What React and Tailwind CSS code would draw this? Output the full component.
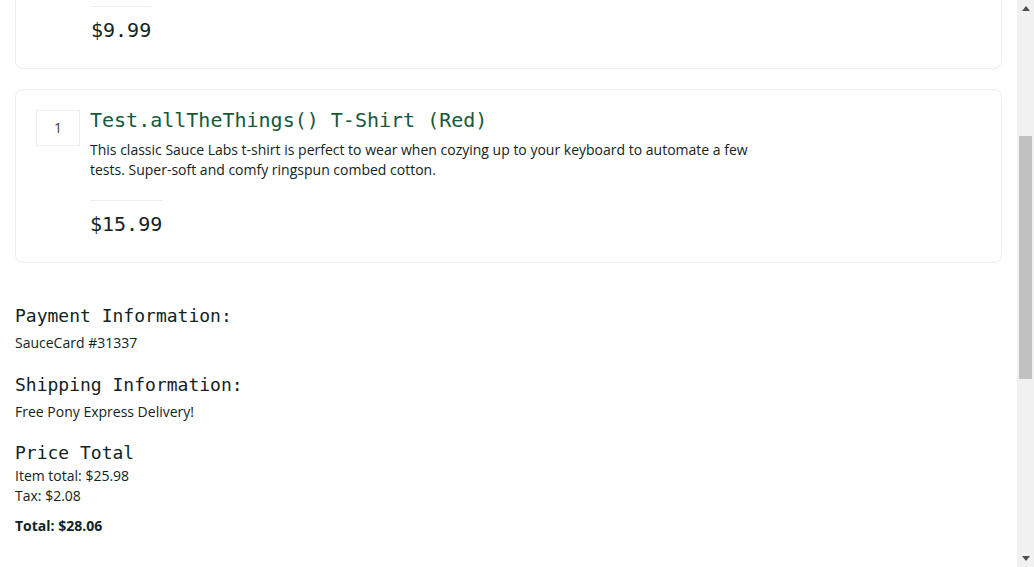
const mono = { fontFamily: '"DejaVu Sans Mono", "Liberation Mono", monospace' };

const ScrollBar = () => (
    <div className="w-[17px] h-full bg-[#f1f1f1] flex flex-col items-center shrink-0">
        <div className="h-[17px] flex items-center justify-center">
            <svg width="8" height="5" viewBox="0 0 8 5">
                <path d="M0 5 L4 0 L8 5 Z" fill="#505050" />
            </svg>
        </div>
        <div className="h-[119px]" />
        <div className="w-[13px] h-[243px] bg-[#c1c1c1]" />
        <div className="flex-1" />
        <div className="h-[17px] flex items-center justify-center">
            <svg width="8" height="5" viewBox="0 0 8 5">
                <path d="M0 0 L8 0 L4 5 Z" fill="#505050" />
            </svg>
        </div>
    </div>
);

const App = () => {
    return (
        <div
            className="w-[1034px] h-[567px] overflow-hidden flex bg-white text-[#132322]"
            style={{ fontFamily: '"Open Sans", "Noto Sans", sans-serif' }}
        >
            <div className="flex-1 px-[15px]">
                {/* first item, top scrolled out of view */}
                <div className="border-x border-b border-[#ededef] rounded-b-lg pl-[75px] pt-[6px] pb-[26px]">
                    <div className="w-[60px] border-t border-[#ededef]" />
                    <div className="text-xl leading-6 font-medium mt-[11px]" style={mono}>$9.99</div>
                </div>

                <div className="mt-[20px] border border-[#ededef] rounded-lg pl-[20px] pt-[20px] pb-[26px] flex">
                    <div className="w-[44px] h-[36px] border border-[#ededef] flex items-center justify-center text-sm text-[#3d3d3d] shrink-0">
                        1
                    </div>
                    <div className="ml-[10px] -mt-[2px]">
                        <div className="text-xl leading-6 text-[#18583a] font-medium" style={mono}>
                            Test.allTheThings() T-Shirt (Red)
                        </div>
                        <div className="mt-[8px] max-w-[680px] text-sm leading-5">
                            This classic Sauce Labs t-shirt is perfect to wear when cozying up to your keyboard to automate a few tests. Super-soft and comfy ringspun combed cotton.
                        </div>
                        <div className="mt-[20px] w-[72px] border-t border-[#ededef]" />
                        <div className="text-xl leading-6 font-medium mt-[11px]" style={mono}>$15.99</div>
                    </div>
                </div>

                <div className="mt-[41px] text-lg leading-6 font-medium" style={mono}>Payment Information:</div>
                <div className="mt-[5px] text-sm leading-5">SauceCard #31337</div>

                <div className="mt-[20px] text-lg leading-6 font-medium" style={mono}>Shipping Information:</div>
                <div className="mt-[5px] text-sm leading-5">Free Pony Express Delivery!</div>

                <div className="mt-[19px] text-lg leading-6 font-medium" style={mono}>Price Total</div>
                <div className="mt-[1px] text-sm leading-5">Item total: $25.98</div>
                <div className="text-sm leading-5">Tax: $2.08</div>
                <div className="mt-[10px] text-sm leading-5 font-bold">Total: $28.06</div>
            </div>
            <ScrollBar />
        </div>
    );
};

export default App;
